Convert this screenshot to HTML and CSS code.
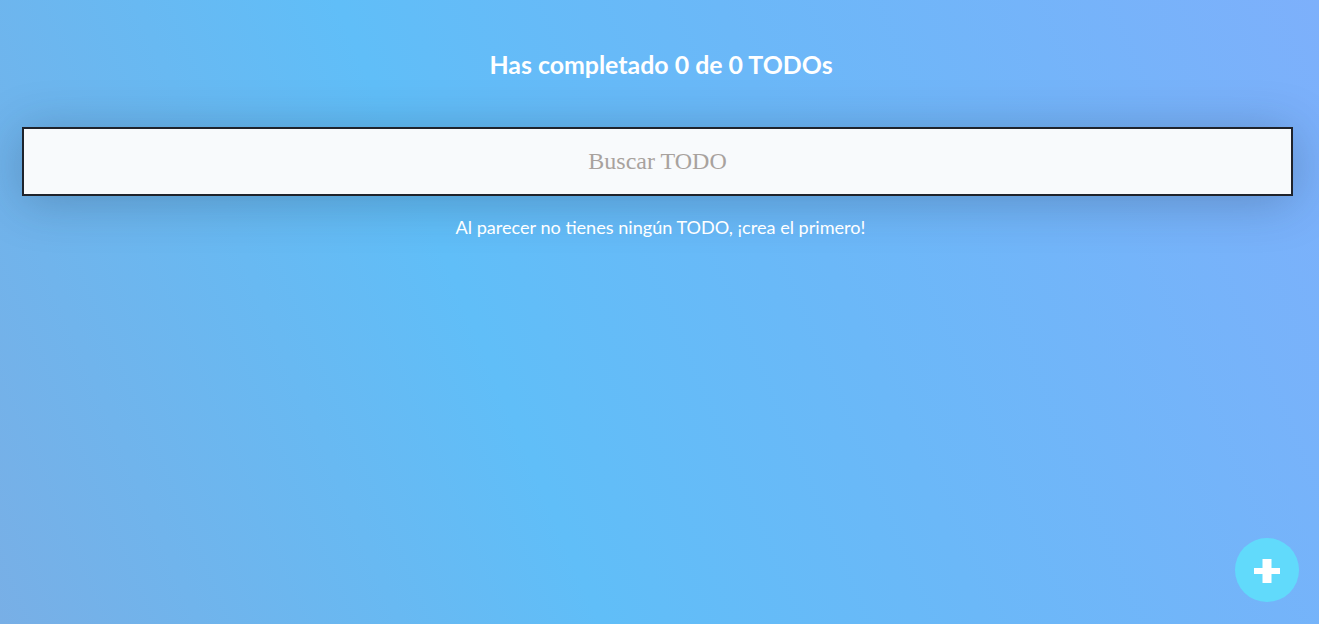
FILE: index.html
```html
<!DOCTYPE html>
<html lang="es">
<head>
<meta charset="utf-8">
<title>TODOs</title>
<link rel="stylesheet" href="styles.css">
</head>
<body>
<main class="app">
  <h1 class="counter">Has completado 0 de 0 TODOs</h1>
  <input class="search" type="text" placeholder="Buscar TODO">
  <p class="empty">Al parecer no tienes ningún TODO, ¡crea el primero!</p>
</main>
<button class="fab" type="button" aria-label="Crear TODO">
  <svg width="64" height="64" viewBox="0 0 64 64"><rect x="19" y="30" width="26" height="6" fill="#fff"/><rect x="27.5" y="21" width="9" height="24" fill="#fff"/></svg>
</button>
</body>
</html>
```
FILE: styles.css
```css
html, body {
  margin: 0;
  padding: 0;
  height: 100%;
}
body {
  background: linear-gradient(67deg, #78afe6 0%, #60bef8 38%, #6bb8f8 62%, #7db0fb 100%);
  font-family: Lato, "Open Sans", sans-serif;
  color: #ffffff;
  overflow: hidden;
}
.app {
  display: flex;
  flex-direction: column;
  align-items: center;
  padding: 48px 26px 0 22px;
}
.counter {
  margin: 0;
  font-size: 24.9px;
  font-weight: 700;
  line-height: 32px;
  padding-left: 7px;
}
.search {
  box-sizing: border-box;
  width: 100%;
  height: 69px;
  margin-top: 47px;
  border: 2px solid #1f232b;
  background: #f8fafc;
  font-family: "Liberation Serif", serif;
  font-size: 24px;
  text-align: center;
  box-shadow: 0 5px 50px rgba(32, 40, 60, 0.28);
  outline: none;
}
.search::placeholder {
  color: #a8a29e;
}
.empty {
  margin: 19px 0 0;
  padding-left: 6px;
  font-size: 18.1px;
  line-height: 24px;
}
.fab {
  position: fixed;
  right: 20px;
  bottom: 22px;
  width: 64px;
  height: 64px;
  padding: 0;
  border: none;
  border-radius: 50%;
  background: #61dafb;
  display: flex;
  align-items: center;
  justify-content: center;
}
.fab svg {
  display: block;
}
```
